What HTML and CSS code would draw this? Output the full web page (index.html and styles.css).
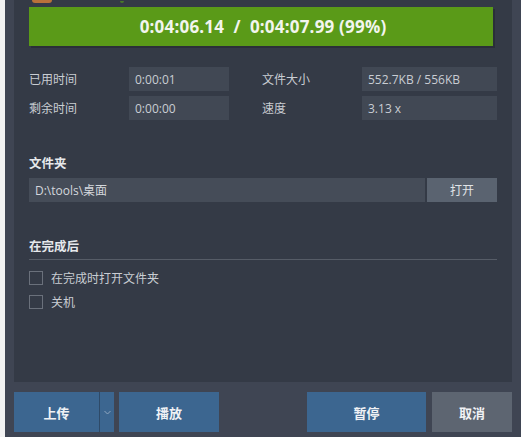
FILE: index.html
```html
<!DOCTYPE html>
<html lang="zh-CN">
<head>
<meta charset="utf-8">
<title>转换进度</title>
<link rel="stylesheet" href="styles.css">
</head>
<body>
<div class="window">
  <div class="panel">
    <div class="peek">
      <span class="peek-orange"></span>
      <span class="peek-green"></span>
    </div>
    <div class="progress">
      <span class="progress-text">0:04:06.14&nbsp; / &nbsp;0:04:07.99 (99%)</span>
    </div>

    <div class="info">
      <span class="label">已用时间</span>
      <span class="value">0:00:01</span>
      <span class="label label-right">文件大小</span>
      <span class="value">552.7KB / 556KB</span>
      <span class="label">剩余时间</span>
      <span class="value">0:00:00</span>
      <span class="label label-right">速度</span>
      <span class="value">3.13 x</span>
    </div>

    <h3 class="heading folder-heading">文件夹</h3>
    <div class="folder-row">
      <div class="folder-input">D:\tools\桌面</div>
      <button class="btn-open">打开</button>
    </div>

    <h3 class="heading after-heading">在完成后</h3>
    <div class="divider"></div>
    <label class="check"><span class="box"></span><span>在完成时打开文件夹</span></label>
    <label class="check"><span class="box"></span><span>关机</span></label>
  </div>

  <div class="actions">
    <div class="split">
      <button class="btn btn-blue btn-upload">上传</button>
      <button class="btn btn-blue btn-drop">
        <svg width="7" height="5" viewBox="0 0 7 5"><path d="M0.5 1 L3.5 4 L6.5 1" fill="none" stroke="#8fa6bf" stroke-width="1"/></svg>
      </button>
    </div>
    <button class="btn btn-blue btn-play">播放</button>
    <div class="spacer"></div>
    <button class="btn btn-blue btn-pause">暂停</button>
    <button class="btn btn-gray btn-cancel">取消</button>
  </div>
</div>
</body>
</html>
```

FILE: styles.css
```css
* { box-sizing: border-box; }

html, body {
  margin: 0;
  padding: 0;
  width: 521px;
  height: 437px;
  overflow: hidden;
  background: #f2f2f2;
  font-family: "Open Sans", "Noto Sans CJK SC", sans-serif;
}

.window {
  margin-left: 5px;
  width: 516px;
  height: 437px;
  background: #3f4553;
  padding-left: 9px;
  padding-right: 9px;
  display: flex;
  flex-direction: column;
}

.panel {
  height: 382px;
  background: #343a46;
  padding: 0 15px;
  display: flex;
  flex-direction: column;
}

.peek {
  height: 3px;
  display: flex;
  align-items: flex-end;
  overflow: hidden;
}
.peek-orange {
  width: 20px;
  height: 3px;
  margin-left: 3px;
  background: #b9713a;
  border-radius: 0 0 10px 10px;
}
.peek-green {
  width: 4px;
  height: 2px;
  margin-left: 68px;
  background: #4a7a2a;
  border-radius: 0 0 2px 2px;
}

.progress {
  margin-top: 4px;
  width: 464px;
  height: 39px;
  background: #5a9a18;
  box-shadow: 2px 2px 0 #2a2f38;
  display: flex;
  align-items: center;
  justify-content: center;
}
.progress-text {
  color: #f2f5ee;
  font-weight: 700;
  font-size: 17px;
  letter-spacing: 0.2px;
  margin-left: 4px;
}

.info {
  margin-top: 21px;
  display: grid;
  grid-template-columns: 100px 100px 133px 135px;
  row-gap: 5px;
  grid-auto-rows: 24px;
}
.label {
  color: #c9cdd3;
  font-size: 12px;
  display: flex;
  align-items: center;
}
.label-right { padding-left: 33px; }
.value {
  background: #414854;
  color: #c9cdd3;
  font-size: 12px;
  display: flex;
  align-items: center;
  padding-left: 6px;
}

.heading {
  margin: 0;
  color: #e6e8eb;
  font-size: 12.5px;
  font-weight: 700;
  line-height: 16px;
}
.folder-heading { margin-top: 36px; }
.after-heading { margin-top: 37px; }

.folder-row {
  margin-top: 6px;
  display: flex;
  gap: 2px;
  height: 24px;
}
.folder-input {
  width: 396px;
  background: #454c58;
  color: #d4d7dc;
  font-size: 12px;
  display: flex;
  align-items: center;
  padding-left: 6px;
}
.btn-open {
  width: 70px;
  border: 0;
  background: #5a6370;
  color: #e0e3e7;
  font-family: inherit;
  font-size: 12px;
  padding: 0;
}

.divider {
  margin-top: 4px;
  height: 1px;
  background: #565c67;
  width: 468px;
}

.check {
  display: flex;
  align-items: center;
  gap: 8px;
  color: #c9cdd3;
  font-size: 12px;
  height: 14px;
  margin-top: 11px;
}
.check + .check { margin-top: 10px; }
.box {
  width: 14px;
  height: 14px;
  border: 1px solid #6a707b;
  background: #343a46;
}

.actions {
  padding-top: 10px;
  height: 55px;
  display: flex;
}
.actions .btn { height: 40px; }
.btn {
  border: 0;
  padding: 0;
  color: #f0f2f5;
  font-family: inherit;
  font-size: 13px;
  font-weight: 700;
}
.btn-blue { background: #3c6690; }
.btn-gray { background: #5d6571; }
.split { display: flex; }
.btn-upload { width: 85px; }
.btn-drop {
  width: 15px;
  border-left: 1px solid #2e4a68;
  display: flex;
  align-items: center;
  justify-content: center;
}
.btn-play { width: 100px; margin-left: 5px; }
.spacer { flex: 1; }
.btn-pause { width: 119px; }
.btn-cancel { width: 80px; margin-left: 6px; }
```
